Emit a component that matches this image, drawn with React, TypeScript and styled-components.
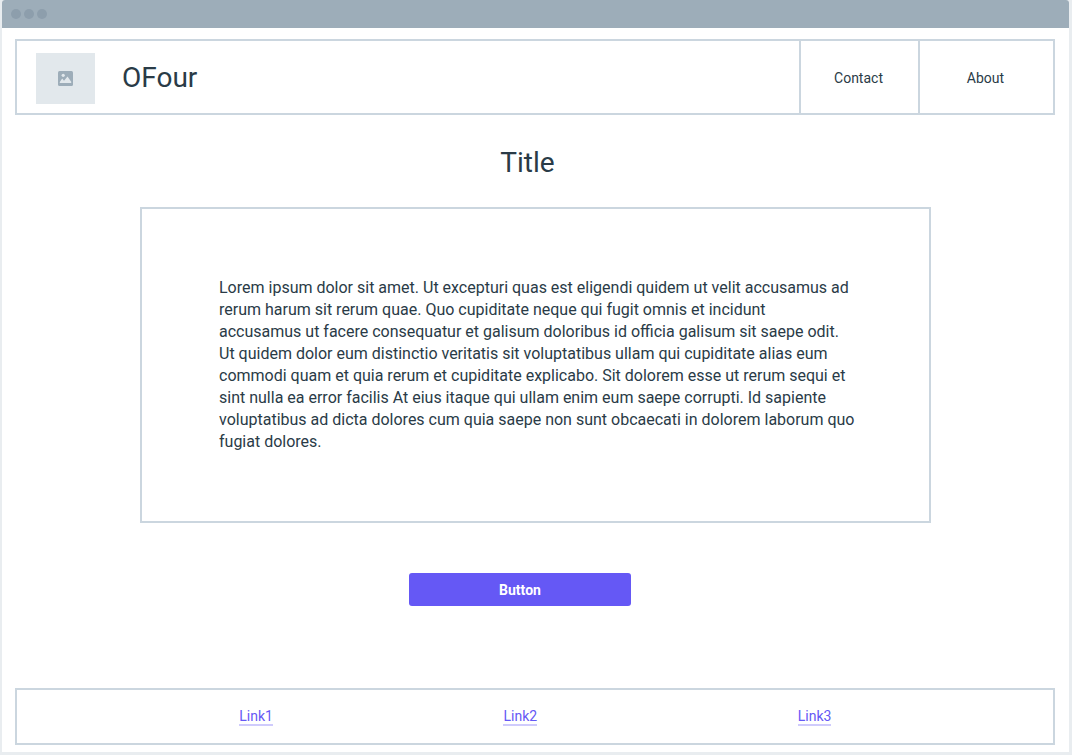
import React, { Fragment } from 'react';
import styled, { createGlobalStyle } from 'styled-components';

const color = {
  ink: '#2a3b47',
  line: '#cbd6df',
  bar: '#9dadb9',
  dot: '#8d9eac',
  accent: '#6558f5',
  accentSoft: '#cfcbfc',
};

const GlobalStyle = createGlobalStyle`
  *, *::before, *::after { box-sizing: border-box; }
  body {
    margin: 0;
    background: #e9edf0;
    color: ${color.ink};
    font-family: Roboto, "Liberation Sans", sans-serif;
  }
`;

const Page = styled.div`
  min-height: 100vh;
  display: flex;
  padding: 0 3px 3px 2px;
`;

const Window = styled.div`
  flex: 1;
  display: flex;
  flex-direction: column;
  background: #fff;
  border-radius: 3px 3px 0 0;
  overflow: hidden;
`;

const TitleBar = styled.div`
  display: flex;
  align-items: center;
  gap: 3px;
  height: 28px;
  padding-left: 9px;
  background: ${color.bar};
`;

const Dot = styled.span`
  width: 10px;
  height: 10px;
  border-radius: 50%;
  background: ${color.dot};
`;

const Content = styled.div`
  flex: 1;
  display: flex;
  flex-direction: column;
  padding: 11px 14px 7px 13px;
`;

const Header = styled.header`
  display: flex;
  height: 76px;
  border: 2px solid ${color.line};
`;

const Brand = styled.div`
  flex: 1;
  display: flex;
  align-items: center;
  gap: 27px;
  padding: 2px 0 0 19px;
  font-size: 28px;
  line-height: 36px;
`;

const Logo = styled.span`
  display: flex;
  align-items: center;
  justify-content: center;
  width: 59px;
  height: 51px;
  background: #e2e8ec;
`;

const Nav = styled.nav`
  display: flex;
`;

const NavLink = styled.a<{ $width: number }>`
  display: flex;
  align-items: center;
  justify-content: center;
  width: ${(p) => p.$width}px;
  padding: 2px 2px 0 0;
  border-left: 2px solid ${color.line};
  color: inherit;
  font-size: 14px;
  text-decoration: none;
`;

const Main = styled.main`
  flex: 1;
  display: flex;
  flex-direction: column;
  align-items: center;
  padding: 30px 0 40px;
`;

const Title = styled.h1`
  margin: 0 15px 26px 0;
  font-size: 28px;
  line-height: 36px;
  font-weight: 400;
`;

const Card = styled.section`
  align-self: stretch;
  min-height: 316px;
  margin: 0 124px 50px 125px;
  padding: 68px 74px 66px 77px;
  border: 2px solid ${color.line};
`;

const Paragraph = styled.p`
  margin: 0;
  font-size: 16px;
  line-height: 22px;
`;

const Button = styled.button`
  width: 222px;
  height: 33px;
  margin-right: 30px;
  border: 0;
  border-radius: 3px;
  background: ${color.accent};
  color: #fff;
  font: 700 14px Roboto, "Liberation Sans", sans-serif;
`;

const Footer = styled.footer`
  display: grid;
  grid-template-columns: 222fr 264fr 294fr 255fr;
  align-items: center;
  height: 57px;
  border: 2px solid ${color.line};
`;

const FooterLink = styled.a`
  justify-self: start;
  border-bottom: 2px solid ${color.accentSoft};
  color: ${color.accent};
  font-size: 14px;
  line-height: 16px;
  text-decoration: none;

  &:first-child { grid-column-start: 2; }
`;

const bodyLines = [
  'Lorem ipsum dolor sit amet. Ut excepturi quas est eligendi quidem ut velit accusamus ad',
  'rerum harum sit rerum quae. Quo cupiditate neque qui fugit omnis et incidunt',
  'accusamus ut facere consequatur et galisum doloribus id officia galisum sit saepe odit.',
  'Ut quidem dolor eum distinctio veritatis sit voluptatibus ullam qui cupiditate alias eum',
  'commodi quam et quia rerum et cupiditate explicabo. Sit dolorem esse ut rerum sequi et',
  'sint nulla ea error facilis At eius itaque qui ullam enim eum saepe corrupti. Id sapiente',
  'voluptatibus ad dicta dolores cum quia saepe non sunt obcaecati in dolorem laborum quo',
  'fugiat dolores.',
];

function ImageIcon() {
  return (
    <svg width="15" height="15" viewBox="0 0 15 15" aria-hidden="true">
      <rect width="15" height="15" rx="1.5" fill={color.bar} />
      <circle cx="5.2" cy="4.3" r="1.6" fill="#e2e8ec" />
      <path d="M1.8 12 L1.8 11 L4.2 7.6 L6 9.7 L9.5 5.6 L13.2 10.8 L13.2 12 Z" fill="#e2e8ec" />
    </svg>
  );
}

export default function App() {
  return (
    <>
      <GlobalStyle />
      <Page>
        <Window>
          <TitleBar>
            <Dot />
            <Dot />
            <Dot />
          </TitleBar>
          <Content>
            <Header>
              <Brand>
                <Logo>
                  <ImageIcon />
                </Logo>
                OFour
              </Brand>
              <Nav>
                <NavLink href="#contact" $width={119}>Contact</NavLink>
                <NavLink href="#about" $width={135}>About</NavLink>
              </Nav>
            </Header>
            <Main>
              <Title>Title</Title>
              <Card>
                <Paragraph>
                  {bodyLines.map((line, i) => (
                    <Fragment key={line}>
                      {i > 0 && <br />}
                      {line}
                    </Fragment>
                  ))}
                </Paragraph>
              </Card>
              <Button type="button">Button</Button>
            </Main>
            <Footer>
              <FooterLink href="#link1">Link1</FooterLink>
              <FooterLink href="#link2">Link2</FooterLink>
              <FooterLink href="#link3">Link3</FooterLink>
            </Footer>
          </Content>
        </Window>
      </Page>
    </>
  );
}
